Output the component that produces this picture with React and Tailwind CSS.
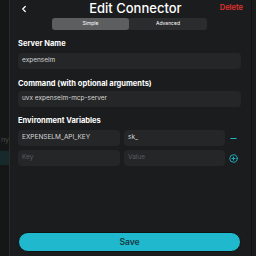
import { ChevronLeft, Minus, CirclePlus } from "lucide-react";

function Label({ children, className = "" }) {
    return <div className={"h-[8px] flex items-center text-[7.5px] font-bold text-white leading-none " + className}>{children}</div>
}

function Input({ children, className = "", placeholder }) {
    return (
        <div className={"h-[16px] rounded-[4px] bg-[#252627] px-[4px] flex items-center text-[6.5px] " + (placeholder ? "text-[#5b5d60] " : "text-[#d6d6d6] ") + className}>{children}</div>
    )
}

export default function App()
{
    return (
        <div className="w-[256px] h-[256px] bg-[#151616] flex overflow-hidden" style={{ fontFamily: "Inter, 'Noto Sans', sans-serif" }}>
            <div className="w-[9px] flex flex-col items-end pt-[136px] overflow-hidden">
                <div className="text-[7px] text-[#4a4b4c] leading-none">ny</div>
                <div className="mt-[8px] w-[9px] h-[14px] bg-[#17292b]"></div>
            </div>
            <div className="w-[242px] border-l border-[#2a2b2c] bg-[#1b1c1d] flex flex-col pl-[8px] pr-[10px]">
                <div className="flex items-center h-[17px]">
                    <ChevronLeft size={10} strokeWidth={3} className="text-white ml-[1px]" />
                    <div className="flex-1 text-center text-[13px] font-medium text-white leading-none ml-[22px]">Edit Connector</div>
                    <div className="text-[7.5px] text-[#e0332e] font-semibold mr-[-2px] mb-[1px]">Delete</div>
                </div>
                <div className="ml-[34px] mt-[1px] flex w-[155px] h-[12px] rounded-[3px] bg-[#2b2c2e] text-[5px] text-white">
                    <div className="w-[77px] rounded-[3px] bg-[#5d5e60] flex items-center justify-center">Simple</div>
                    <div className="flex-1 flex items-center justify-center">Advanced</div>
                </div>
                <Label className="mt-[10px]">Server Name</Label>
                <Input className="mt-[5px]">expenselm</Input>
                <Label className="mt-[11px]">Command (with optional arguments)</Label>
                <Input className="mt-[3px]">uvx expenselm-mcp-server</Input>
                <Label className="mt-[10px]">Environment Variables</Label>
                <div className="mt-[5px] flex flex-col gap-[4px]">
                    <div className="flex items-center">
                        <Input className="w-[102px]">EXPENSELM_API_KEY</Input>
                        <Input className="w-[101px] ml-[4px]">sk_</Input>
                        <div className="flex-1 flex justify-center text-[#1fb3c8]"><Minus size={9} strokeWidth={3} /></div>
                    </div>
                    <div className="flex items-center">
                        <Input className="w-[102px]" placeholder>Key</Input>
                        <Input className="w-[101px] ml-[4px]" placeholder>Value</Input>
                        <div className="flex-1 flex justify-center text-[#1fb3c8]"><CirclePlus size={9} strokeWidth={2.5} /></div>
                    </div>
                </div>
                <div className="mt-auto mb-[4px] h-[20px] rounded-full bg-[#20b8cd] border border-[#0e1414] flex items-center justify-center text-[8.5px] font-semibold text-[#173840]">Save</div>
            </div>
            <div className="flex-1 border-l border-[#101111] bg-[#1a1b1b]"></div>
        </div>
    )
}
